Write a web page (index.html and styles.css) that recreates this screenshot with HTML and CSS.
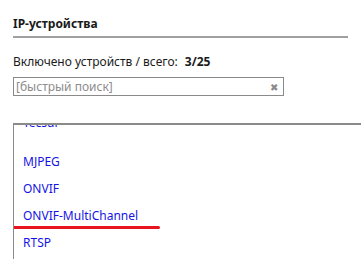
FILE: index.html
```html
<!DOCTYPE html>
<html>
<head>
    <title>IP-устройства</title>
    <link rel="stylesheet" href="styles.css">
</head>
<body>
    <div class="panel">
        <h2 class="title">IP-устройства</h2>

        <div class="counter">
            Включено устройств / всего: <b>3/25</b>
        </div>

        <div class="search">
            <input type="text" class="search-input" placeholder="[быстрый поиск]">
            <span class="search-clear">&#x2716;</span>
        </div>

        <div class="device-list">
            <div class="item item-cut">Tecsui</div>
            <div class="item">MJPEG</div>
            <div class="item">ONVIF</div>
            <div class="item item-marked">ONVIF-MultiChannel</div>
            <div class="item">RTSP</div>
        </div>
    </div>
</body>
</html>
```

FILE: styles.css
```css
body {
    margin: 0;
    font-family: 'Noto Sans', 'Open Sans', sans-serif;
    background-color: white;
    color: #1a1a1a;
    overflow: hidden;
}

.panel {
    padding: 15px 0 0 13px;
}

.title {
    margin: 0 13px 0 0;
    padding: 0 0 3px 0;
    font-size: 12px;
    font-weight: bold;
    line-height: 18px;
    border-bottom: 2px solid #a0a0a0;
}

.counter {
    margin-top: 16px;
    font-size: 12px;
    line-height: 16px;
}

.counter b {
    margin-left: 4px;
}

.search {
    position: relative;
    width: 271px;
    margin-top: 7px;
}

.search-input {
    display: block;
    box-sizing: border-box;
    width: 100%;
    height: 19px;
    margin: 0;
    padding: 0 18px 0 2px;
    border: 1px solid #8a8a8a;
    font-family: inherit;
    font-size: 12px;
    outline: none;
}

.search-input::placeholder {
    color: #8c8c8c;
}

.search-clear {
    position: absolute;
    right: 6px;
    top: 3px;
    font-size: 10px;
    color: #8a8a8a;
}

.device-list {
    height: 134px;
    margin-top: 27px;
    border-top: 2px solid #8a8a8a;
    border-left: 1px solid #8a8a8a;
    overflow: hidden;
}

.item {
    height: 27px;
    padding-left: 9px;
    font-size: 12px;
    line-height: 27px;
    color: #1414e6;
}

.item-cut {
    margin-top: -16px;
    margin-bottom: 12px;
}

.item-marked {
    position: relative;
}

.item-marked::after {
    content: "";
    position: absolute;
    left: -6px;
    top: 24px;
    width: 152px;
    height: 3px;
    border-radius: 2px;
    background-color: #e8141e;
}
```
